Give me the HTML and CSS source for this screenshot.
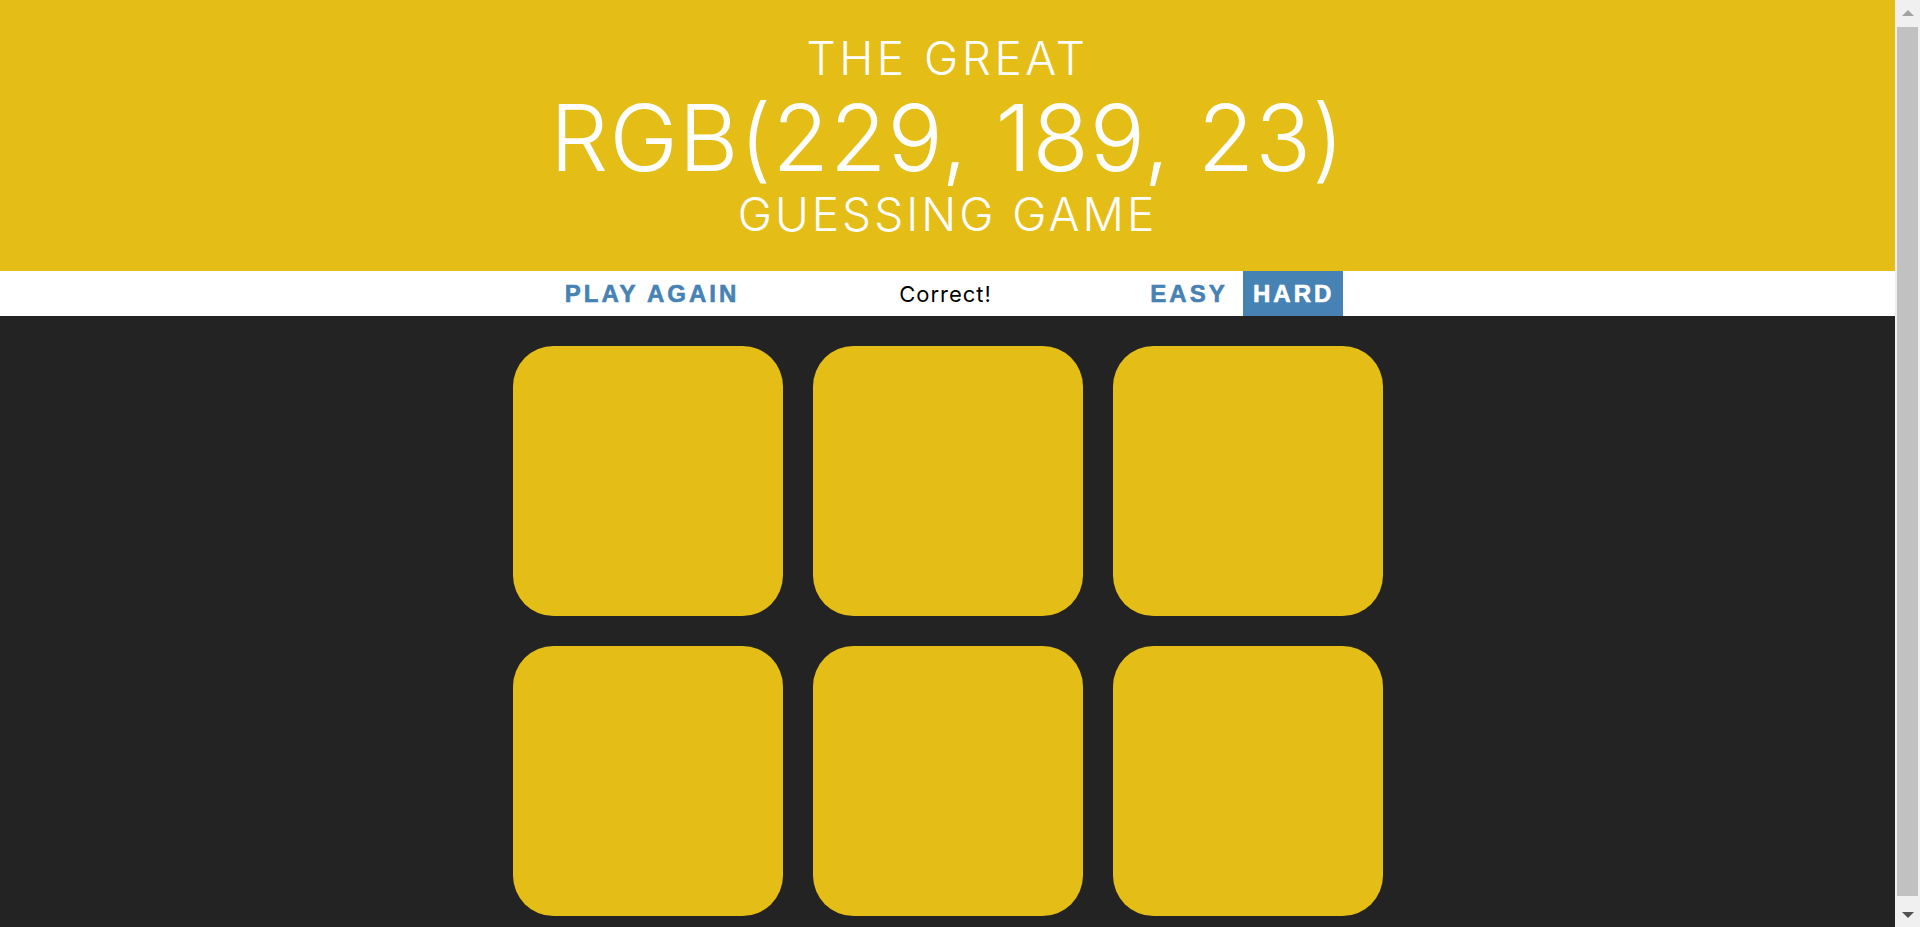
FILE: index.html
```html
<!DOCTYPE html>
<html lang="en">
<head>
<meta charset="utf-8">
<title>Color Game</title>
<link rel="stylesheet" href="styles.css">
</head>
<body>
<div class="page">
  <header class="title">
    <span class="title-line">The Great</span>
    <span class="title-color">RGB(229, 189, 23)</span>
    <span class="title-line title-last">Guessing Game</span>
  </header>
  <nav class="stripe">
    <button class="btn btn-reset">Play Again</button>
    <span class="message">Correct!</span>
    <button class="btn btn-mode">Easy</button>
    <button class="btn btn-mode selected">Hard</button>
  </nav>
  <main class="board">
    <div class="square"></div>
    <div class="square"></div>
    <div class="square"></div>
    <div class="square"></div>
    <div class="square"></div>
    <div class="square"></div>
  </main>
</div>
<aside class="scrollbar" aria-hidden="true">
  <div class="sb-btn"><span class="sb-arrow-up"></span></div>
  <div class="sb-track"><div class="sb-thumb"></div></div>
  <div class="sb-btn"><span class="sb-arrow-down"></span></div>
</aside>
</body>
</html>
```

FILE: styles.css
```css
html {
  background: #232323;
}

body {
  margin: 0;
  display: grid;
  grid-template-columns: 1fr 25px;
  background: #232323;
  font-family: Inter, "Liberation Sans", sans-serif;
}

.page {
  min-width: 0;
}

.scrollbar {
  position: sticky;
  top: 0;
  align-self: start;
  height: 100vh;
  display: flex;
  flex-direction: column;
  background: #f0f0f0;
}

.sb-btn {
  height: 25px;
  display: flex;
  align-items: center;
  justify-content: center;
}

.sb-arrow-up {
  width: 0;
  height: 0;
  border-left: 6px solid transparent;
  border-right: 6px solid transparent;
  border-bottom: 6px solid #a3a3a3;
}

.sb-arrow-down {
  width: 0;
  height: 0;
  border-left: 6px solid transparent;
  border-right: 6px solid transparent;
  border-top: 6px solid #505050;
}

.sb-track {
  flex: 1;
  display: flex;
  padding: 2px 2px 6px;
}

.sb-thumb {
  flex: 1;
  background: #c1c1c1;
}

.title {
  display: flex;
  flex-direction: column;
  align-items: center;
  margin: 0;
  padding: 32px 0 33px;
  background: rgb(229, 189, 23);
  color: #ffffff;
  font-weight: 300;
  text-transform: uppercase;
  text-align: center;
}

.title-line {
  font-size: 46px;
  line-height: 53px;
  letter-spacing: 3.5px;
}

.title-last {
  line-height: 47px;
  letter-spacing: 3px;
}

.title-color {
  font-size: 92px;
  line-height: 106px;
  letter-spacing: 1px;
}

.stripe {
  display: flex;
  justify-content: center;
  align-items: stretch;
  gap: 4px;
  height: 45px;
  background: #ffffff;
}

.btn {
  border: none;
  background: none;
  margin: 0;
  padding: 0 10px;
  color: steelblue;
  font-family: "Liberation Sans", Arial, sans-serif;
  font-size: 24px;
  font-weight: 700;
  letter-spacing: 3px;
  text-transform: uppercase;
  -webkit-text-stroke: 0.6px currentColor;
  cursor: pointer;
}

.btn-reset {
  width: 200px;
}

.btn-mode {
  width: 100px;
}

.selected {
  background: steelblue;
  color: #ffffff;
}

.message {
  display: flex;
  align-items: center;
  justify-content: center;
  width: 379px;
  color: #000000;
  font-size: 22px;
  font-weight: 400;
  letter-spacing: 1px;
}

.board {
  display: grid;
  grid-template-columns: repeat(3, 270px);
  gap: 30px;
  width: 870px;
  margin: 0 auto;
  padding: 30px 0;
}

.square {
  height: 270px;
  border-radius: 15%;
  background: rgb(229, 189, 23);
}
```
